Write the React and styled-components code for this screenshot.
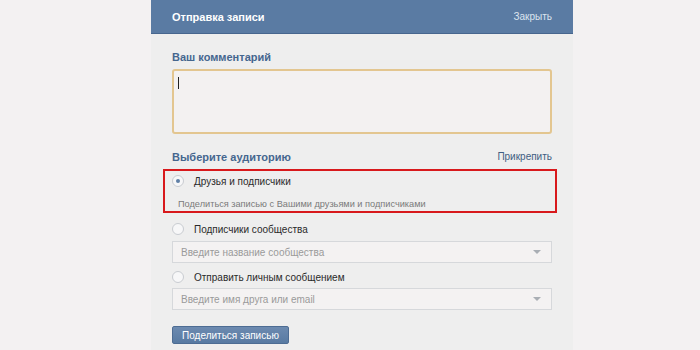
import React from "react";
import styled, { createGlobalStyle } from "styled-components";

const GlobalStyle = createGlobalStyle`
  html, body {
    margin: 0;
    padding: 0;
    background: #f3f1f2;
    font-family: "Liberation Sans", Arial, sans-serif;
  }
  #root {
    width: 700px;
    height: 350px;
    overflow: hidden;
  }
`;

const Page = styled.div`
  width: 700px;
  height: 350px;
  display: flex;
`;

const Panel = styled.div`
  margin-left: 151px;
  width: 422px;
  height: 350px;
  background: #eeeeee;
  display: flex;
  flex-direction: column;
`;

const Header = styled.div`
  height: 33px;
  padding: 0 21px;
  display: flex;
  align-items: center;
  justify-content: space-between;
  background: #5a7ba3;
  border-bottom: 1px solid #47668e;
`;

const HeaderTitle = styled.div`
  color: #ffffff;
  font-size: 11px;
  font-weight: bold;
`;

const HeaderLink = styled.div`
  color: #dbe4ef;
  font-size: 10px;
`;

const Body = styled.div`
  padding: 16px 21px 0;
  display: flex;
  flex-direction: column;
`;

const Label = styled.div`
  color: #45668e;
  font-size: 11px;
  font-weight: bold;
  line-height: 14px;
`;

const SectionRow = styled.div`
  margin-top: ${(p) => p.$mt || 0}px;
  display: flex;
  justify-content: space-between;
  align-items: center;
  line-height: 14px;
`;

const Attach = styled.div`
  color: #3f5d82;
  font-size: 10px;
`;

const Comment = styled.div`
  margin-top: 5px;
  height: 65px;
  box-sizing: border-box;
  border: 2px solid #e3c690;
  border-radius: 3px;
  background: #f3f1f1;
  padding: 6px 4px;
`;

const Caret = styled.div`
  width: 1px;
  height: 12px;
  background: #222;
`;

const Highlight = styled.div`
  margin: 5px -5px 0 -9px;
  height: 44px;
  box-sizing: border-box;
  border: 2px solid #d8191c;
  padding: 0 0 0 7px;
  display: flex;
  flex-direction: column;
`;

const OptionRow = styled.div`
  margin-top: ${(p) => p.$mt || 0}px;
  height: 20px;
  display: flex;
  align-items: center;
  gap: 10px;
  font-size: 10px;
  color: #2a2a2a;
`;

const Radio = styled.span`
  width: 10px;
  height: 10px;
  border-radius: 50%;
  border: 1px solid #c9ccd1;
  background: #f7f7f8;
  display: flex;
  align-items: center;
  justify-content: center;
  flex-shrink: 0;

  &::after {
    content: "";
    width: 4px;
    height: 4px;
    border-radius: 50%;
    background: ${(p) => (p.$checked ? "#5f7fa6" : "transparent")};
  }
`;

const Hint = styled.div`
  margin-top: 6px;
  margin-left: 6px;
  font-size: 9.2px;
  line-height: 14px;
  color: #7a7a7a;
`;

const Select = styled.div`
  margin-top: ${(p) => p.$mt || 0}px;
  height: 22px;
  box-sizing: border-box;
  border: 1px solid #d6d8db;
  background: #f4f2f2;
  padding: 0 8px;
  display: flex;
  align-items: center;
  justify-content: space-between;
  font-size: 10px;
  color: #9a9a9a;
`;

const Arrow = styled.span`
  width: 0;
  height: 0;
  border-left: 4px solid transparent;
  border-right: 4px solid transparent;
  border-top: 4px solid #a9aeb4;
  margin-right: 2px;
`;

const ShareButton = styled.button`
  margin-top: 16px;
  align-self: flex-start;
  width: 117px;
  height: 18px;
  border: 1px solid #4d6c93;
  border-radius: 2px;
  background: linear-gradient(#6c8ab0, #587aa2);
  color: #ffffff;
  font-family: inherit;
  font-size: 10px;
  padding: 0;
  cursor: pointer;
`;

const App = () => (
  <Page>
    <GlobalStyle />
    <Panel>
      <Header>
        <HeaderTitle>Отправка записи</HeaderTitle>
        <HeaderLink>Закрыть</HeaderLink>
      </Header>
      <Body>
        <Label>Ваш комментарий</Label>
        <Comment>
          <Caret />
        </Comment>
        <SectionRow $mt={16}>
          <Label>Выберите аудиторию</Label>
          <Attach>Прикрепить</Attach>
        </SectionRow>
        <Highlight>
          <OptionRow>
            <Radio $checked />
            Друзья и подписчики
          </OptionRow>
          <Hint>Поделиться записью с Вашими друзьями и подписчиками</Hint>
        </Highlight>
        <OptionRow $mt={6}>
          <Radio />
          Подписчики сообщества
        </OptionRow>
        <Select $mt={2}>
          Введите название сообщества
          <Arrow />
        </Select>
        <OptionRow $mt={4}>
          <Radio />
          Отправить личным сообщением
        </OptionRow>
        <Select $mt={1}>
          Введите имя друга или email
          <Arrow />
        </Select>
        <ShareButton>Поделиться записью</ShareButton>
      </Body>
    </Panel>
  </Page>
);

export default App;
